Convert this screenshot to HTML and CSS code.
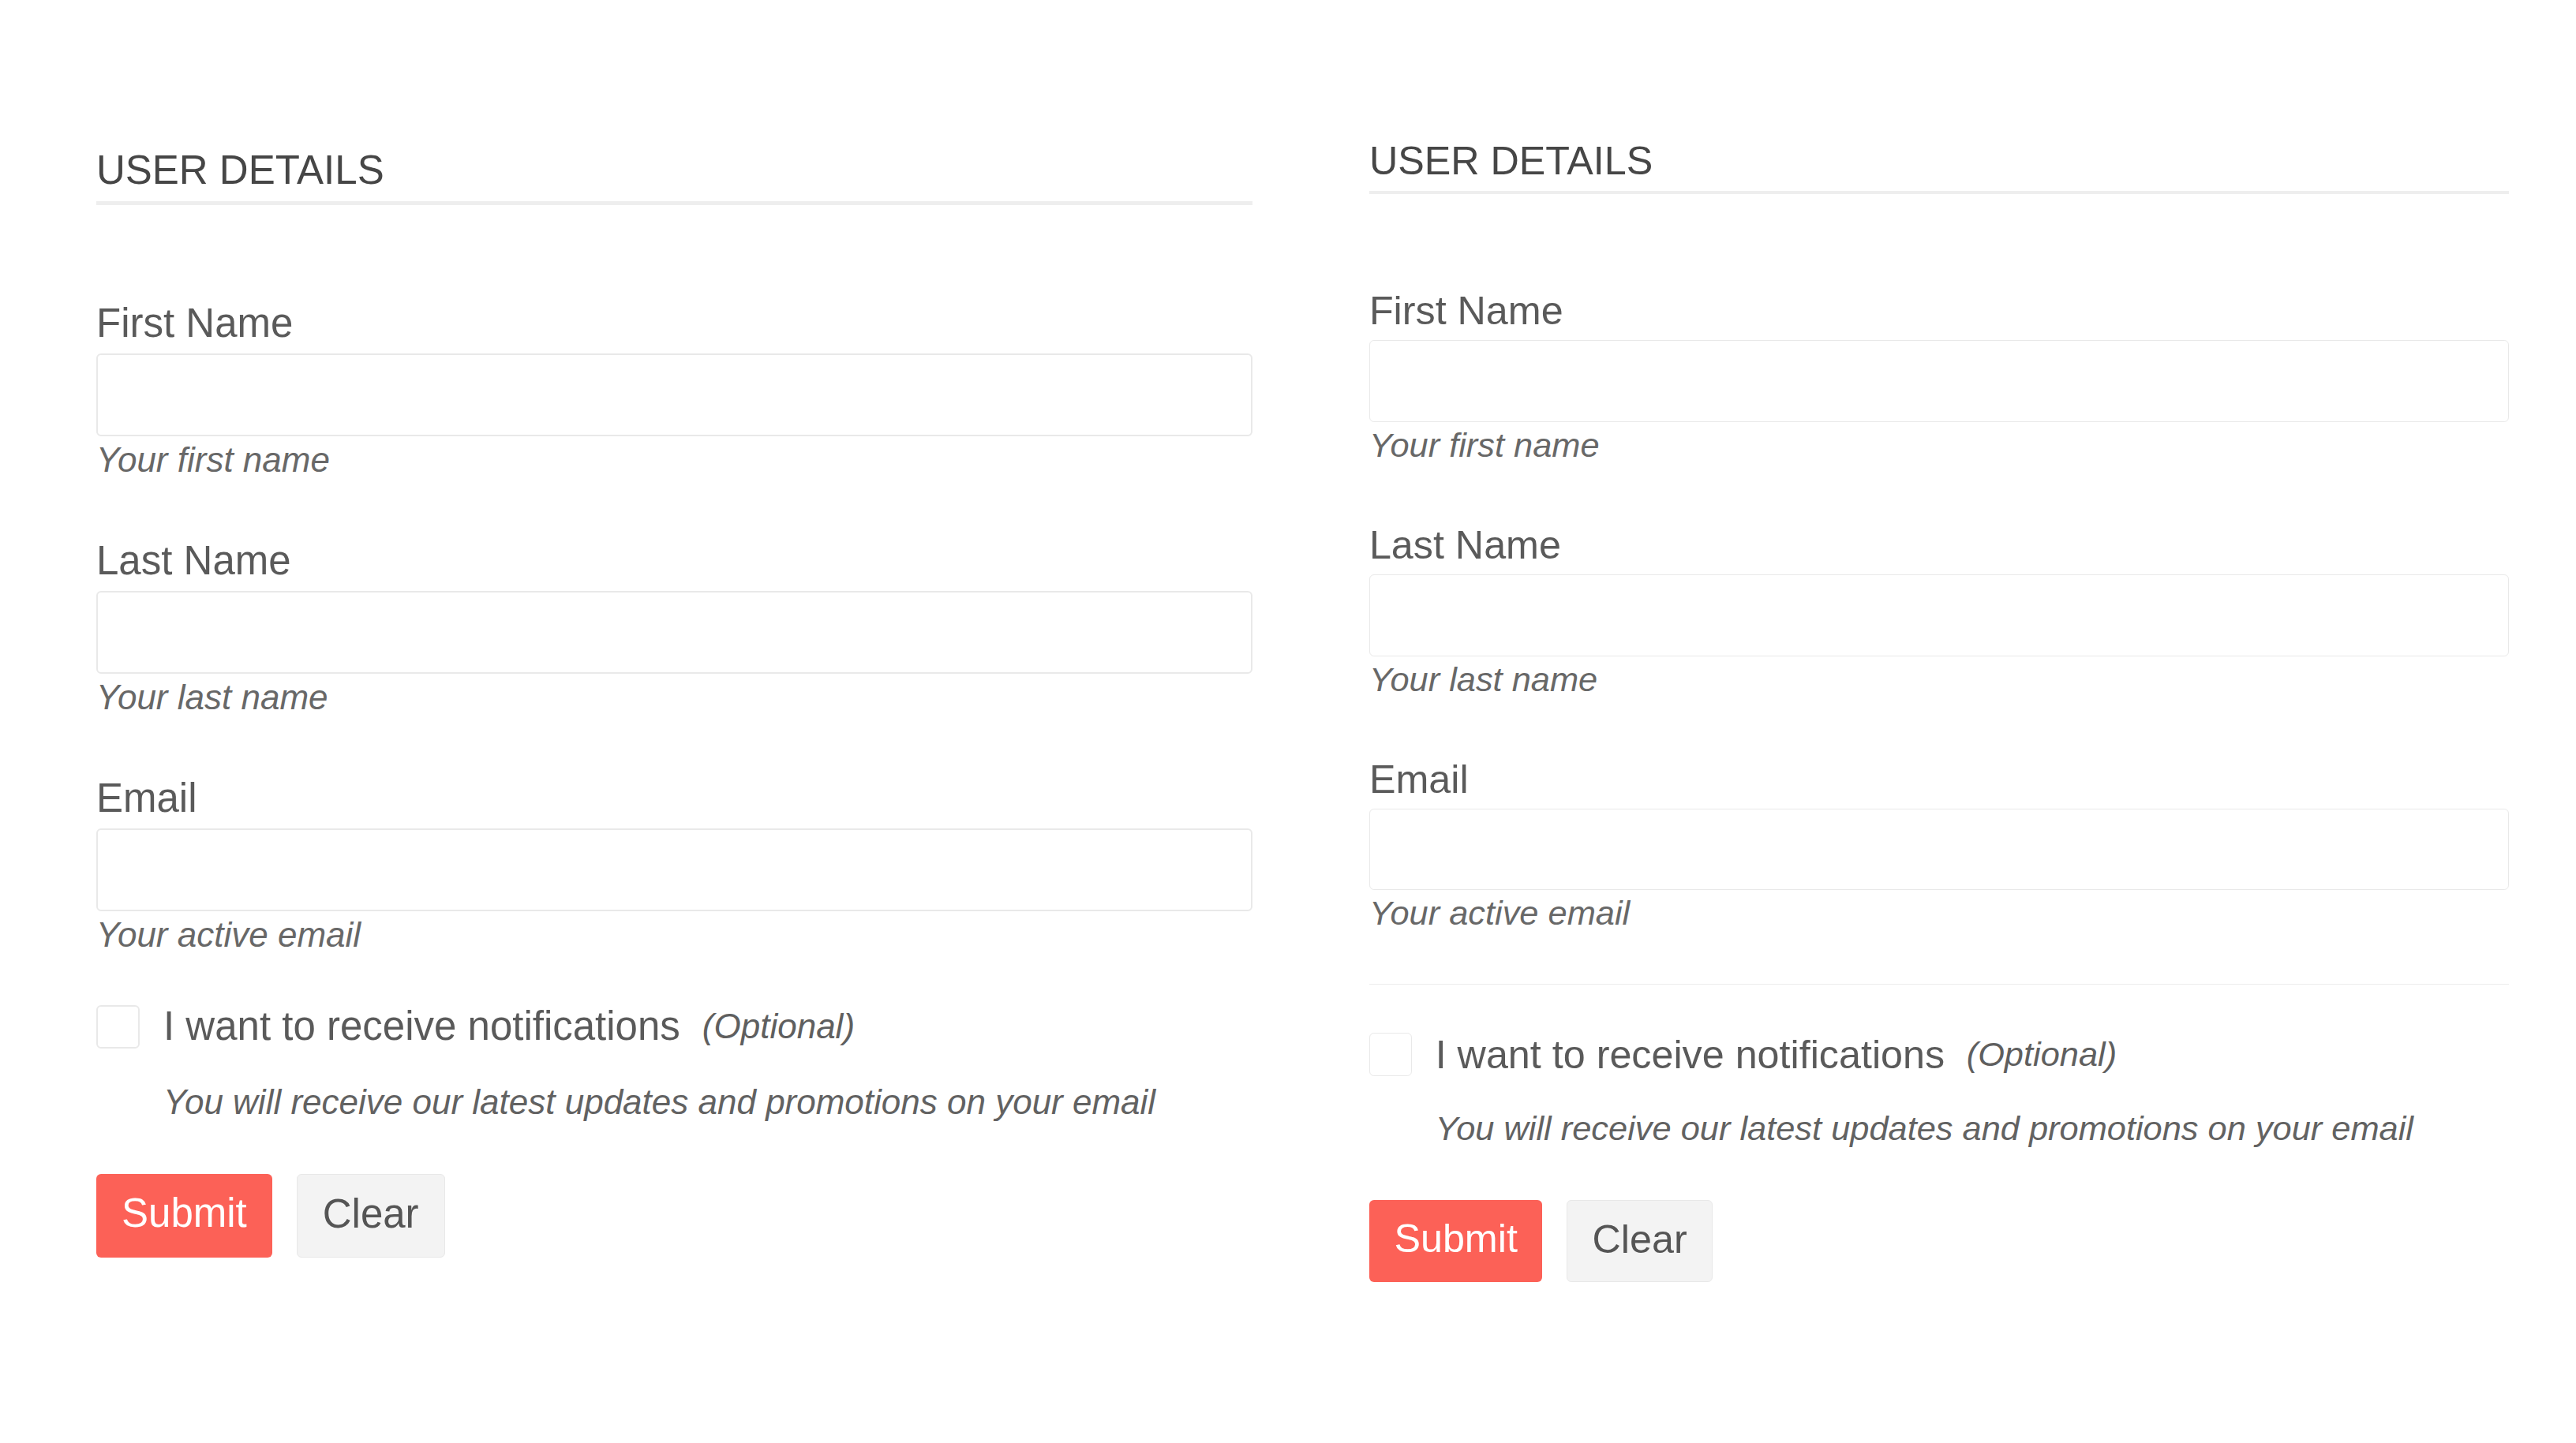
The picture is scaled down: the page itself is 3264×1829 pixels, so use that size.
FILE: index.html
```html
<!DOCTYPE html>
<html lang="en">
<head>
<meta charset="utf-8">
<title>User Details</title>
<link rel="stylesheet" href="styles.css">
</head>
<body>
<main class="page">
  <form class="user-form">
    <h2 class="form-title">USER DETAILS</h2>
    <div class="field">
      <label class="field-label" for="fn1">First Name</label>
      <input class="field-input" id="fn1" type="text">
      <p class="field-hint">Your first name</p>
    </div>
    <div class="field">
      <label class="field-label" for="ln1">Last Name</label>
      <input class="field-input" id="ln1" type="text">
      <p class="field-hint">Your last name</p>
    </div>
    <div class="field">
      <label class="field-label" for="em1">Email</label>
      <input class="field-input" id="em1" type="email">
      <p class="field-hint">Your active email</p>
    </div>
    <div class="checkbox-row">
      <input class="checkbox" id="nt1" type="checkbox">
      <label class="checkbox-label" for="nt1">I want to receive notifications</label>
      <span class="optional">(Optional)</span>
    </div>
    <p class="checkbox-help">You will receive our latest updates and promotions on your email</p>
    <div class="actions">
      <button class="btn btn-primary" type="button">Submit</button>
      <button class="btn btn-secondary" type="button">Clear</button>
    </div>
  </form>

  <form class="user-form user-form--divided">
    <h2 class="form-title">USER DETAILS</h2>
    <div class="field">
      <label class="field-label" for="fn2">First Name</label>
      <input class="field-input" id="fn2" type="text">
      <p class="field-hint">Your first name</p>
    </div>
    <div class="field">
      <label class="field-label" for="ln2">Last Name</label>
      <input class="field-input" id="ln2" type="text">
      <p class="field-hint">Your last name</p>
    </div>
    <div class="field">
      <label class="field-label" for="em2">Email</label>
      <input class="field-input" id="em2" type="email">
      <p class="field-hint">Your active email</p>
    </div>
    <hr class="form-divider">
    <div class="checkbox-row">
      <input class="checkbox" id="nt2" type="checkbox">
      <label class="checkbox-label" for="nt2">I want to receive notifications</label>
      <span class="optional">(Optional)</span>
    </div>
    <p class="checkbox-help">You will receive our latest updates and promotions on your email</p>
    <div class="actions">
      <button class="btn btn-primary" type="button">Submit</button>
      <button class="btn btn-secondary" type="button">Clear</button>
    </div>
  </form>
</main>
</body>
</html>
```

FILE: styles.css
```css
html, body {
  margin: 0;
  padding: 0;
  background: #ffffff;
}

body {
  font-family: "Liberation Sans", Arial, Helvetica, sans-serif;
  color: #5b5b5b;
}

.page {
  display: flex;
  align-items: flex-start;
  padding-left: 122px;
}

.user-form {
  width: 1465px;
  margin-top: 186px;
  flex: none;
}

.user-form--divided {
  zoom: 0.986;
  margin-left: 150px;
  margin-top: 176.5px;
}

.form-title {
  margin: 0 0 120px;
  padding-bottom: 9px;
  border-bottom: 5px solid #eeeeee;
  font-size: 51px;
  line-height: 60px;
  font-weight: 400;
  color: #464646;
}

.field + .field {
  margin-top: 72px;
}

.field-label {
  display: block;
  font-size: 51px;
  line-height: 60px;
  color: #5a5a5a;
}

.field-input {
  display: block;
  box-sizing: border-box;
  width: 100%;
  height: 105px;
  margin: 8px 0 0;
  border: 2px solid #e9e9e9;
  border-radius: 6px;
  background: #ffffff;
  outline: none;
}

.field-hint {
  margin: 4px 0 0;
  font-size: 44px;
  line-height: 52px;
  font-style: italic;
  color: #686868;
}

.form-divider {
  margin: 64px 0 0;
  border: 0;
  border-top: 2px solid #ececec;
  height: 0;
}

.checkbox-row {
  display: flex;
  align-items: center;
  margin-top: 60px;
}

.checkbox {
  -webkit-appearance: none;
  appearance: none;
  box-sizing: border-box;
  width: 55px;
  height: 55px;
  margin: 0 30px 0 0;
  border: 2px solid #e9e9e9;
  border-radius: 6px;
  background: #ffffff;
  flex: none;
}

.checkbox-label {
  font-size: 51px;
  line-height: 60px;
  color: #5a5a5a;
}

.optional {
  margin-left: 28px;
  font-size: 44px;
  line-height: 60px;
  font-style: italic;
  color: #5f5f5f;
}

.checkbox-help {
  margin: 40px 0 0;
  padding-left: 85px;
  font-size: 44px;
  line-height: 52px;
  font-style: italic;
  color: #626262;
}

.actions {
  display: flex;
  gap: 31px;
  margin-top: 65px;
}

.btn {
  box-sizing: border-box;
  height: 106px;
  padding: 20px 32px 26px;
  border-radius: 6px;
  font-family: "Liberation Sans", Arial, Helvetica, sans-serif;
  font-size: 51px;
  line-height: 60px;
  cursor: pointer;
}

.btn-primary {
  border: 0;
  background: #fc6157;
  color: #ffffff;
}

.btn-secondary {
  border: 1px solid #e8e8e8;
  background: #f3f3f3;
  color: #555555;
}
```
